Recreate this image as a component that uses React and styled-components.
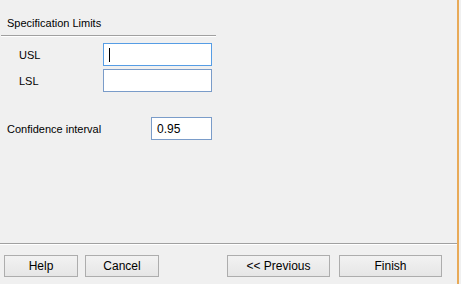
import React from 'react';
import styled, { createGlobalStyle } from 'styled-components';

const GlobalStyle = createGlobalStyle`
  html, body {
    margin: 0;
    padding: 0;
    background: #f0f0f0;
  }
  body {
    font-family: "Liberation Sans", Arial, sans-serif;
    font-size: 11px;
    color: #000;
  }
`;

const Window = styled.div`
  width: 459px;
  height: 284px;
  box-sizing: border-box;
  background: #f0f0f0;
  border-right: 2px solid #e8aa58;
  display: flex;
  flex-direction: column;
`;

const Title = styled.div`
  padding: 17px 0 0 7px;
  height: 18px;
  line-height: 13px;
`;

const Separator = styled.div`
  width: ${p => p.$width}px;
  margin-left: ${p => p.$left || 0}px;
  border-top: 1px solid #a0a0a0;
  border-bottom: 1px solid #ffffff;
`;

const Fields = styled.div`
  display: flex;
  flex-direction: column;
  gap: 3px;
  padding-top: 6px;
`;

const Row = styled.div`
  display: flex;
  align-items: center;
  padding-left: ${p => p.$indent}px;
  margin-top: ${p => p.$top || 0}px;
`;

const Label = styled.div`
  width: ${p => p.$width}px;
`;

const Input = styled.div`
  box-sizing: border-box;
  width: ${p => p.$width}px;
  height: 23px;
  background: #fff;
  border: 1px solid ${p => (p.$focused ? '#569de5' : '#7a9cc9')};
  padding: 0 0 0 5px;
  display: flex;
  align-items: center;
  font-size: 12px;
`;

const Caret = styled.span`
  display: inline-block;
  width: 1px;
  height: 14px;
  background: #000;
`;

const Spacer = styled.div`
  flex: 1;
`;

const ButtonBar = styled.div`
  display: flex;
  align-items: center;
  padding: 10px 15px 7px 4px;
  gap: 7px;
`;

const Button = styled.button`
  box-sizing: border-box;
  width: ${p => p.$width}px;
  height: 22px;
  margin-left: ${p => p.$gapLeft || 0}px;
  border: 1px solid #adadad;
  background: linear-gradient(#f2f2f2, #e6e6e6);
  font-family: "Liberation Sans", Arial, sans-serif;
  font-size: 12px;
  color: #000;
  padding: 0;
`;

export default function App() {
  return (
    <>
      <GlobalStyle />
      <Window>
        <Title>Specification Limits</Title>
        <Separator $width={215} $left={1} />
        <Fields>
          <Row $indent={19}>
            <Label $width={84}>USL</Label>
            <Input $width={109} $focused>
              <Caret />
            </Input>
          </Row>
          <Row $indent={19}>
            <Label $width={84}>LSL</Label>
            <Input $width={109} />
          </Row>
          <Row $indent={7} $top={22}>
            <Label $width={144}>Confidence interval</Label>
            <Input $width={61}>0.95</Input>
          </Row>
        </Fields>
        <Spacer />
        <Separator $width={457} />
        <ButtonBar>
          <Button $width={74}>Help</Button>
          <Button $width={74}>Cancel</Button>
          <Spacer />
          <Button $width={103}>&lt;&lt; Previous</Button>
          <Button $width={103} $gapLeft={2}>Finish</Button>
        </ButtonBar>
      </Window>
    </>
  );
}
